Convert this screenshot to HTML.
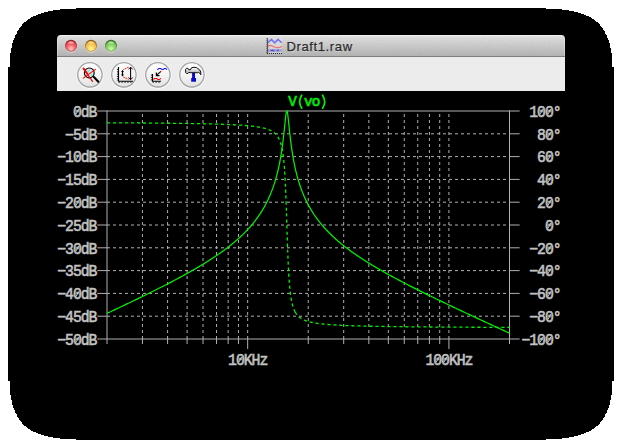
<!DOCTYPE html>
<html><head><meta charset="utf-8"><title>Draft1.raw</title>
<style>
html,body{margin:0;padding:0;background:#fff;}
body{width:622px;height:448px;overflow:hidden;position:relative;font-family:"Liberation Sans",sans-serif;}
svg{position:absolute;left:0;top:0;display:block}
.mono text{font-family:"Liberation Mono",monospace;font-weight:normal;font-size:14.8px;letter-spacing:-1.050px;stroke-width:0.55px;paint-order:stroke;}
#title{position:absolute;left:286.5px;top:38.7px;height:16px;line-height:16px;font-size:13px;letter-spacing:0.62px;color:#2c2c2c;-webkit-text-stroke:0.25px #2c2c2c;white-space:nowrap;text-shadow:0 1px 0 rgba(255,255,255,.55)}
</style></head><body>
<svg width="622" height="448" viewBox="0 0 622 448">
<defs>
<linearGradient id="tb" x1="0" y1="0" x2="0" y2="1"><stop offset="0" stop-color="#e4e4e4"/><stop offset="0.1" stop-color="#dfdfdf"/><stop offset="1" stop-color="#b3b3b3"/></linearGradient>
<radialGradient id="gr" cx="0.5" cy="0.78" r="0.7"><stop offset="0" stop-color="#fdd0cc"/><stop offset="0.55" stop-color="#f6666a"/><stop offset="0.9" stop-color="#ec4a52"/><stop offset="1" stop-color="#c8343c"/></radialGradient>
<radialGradient id="gy" cx="0.5" cy="0.78" r="0.7"><stop offset="0" stop-color="#fef7a4"/><stop offset="0.55" stop-color="#f8cc58"/><stop offset="0.9" stop-color="#f0ae3c"/><stop offset="1" stop-color="#c88a24"/></radialGradient>
<radialGradient id="gg" cx="0.5" cy="0.78" r="0.7"><stop offset="0" stop-color="#d6f6b4"/><stop offset="0.55" stop-color="#8cd86a"/><stop offset="0.9" stop-color="#6cc04e"/><stop offset="1" stop-color="#4a9634"/></radialGradient>
<linearGradient id="bt" x1="0" y1="0" x2="0" y2="1"><stop offset="0" stop-color="#ffffff"/><stop offset="0.5" stop-color="#f4f4f4"/><stop offset="1" stop-color="#e2e2e2"/></linearGradient>
<linearGradient id="hm" x1="0" y1="0" x2="0" y2="1"><stop offset="0" stop-color="#ffffff"/><stop offset="0.6" stop-color="#c4c4c4"/><stop offset="1" stop-color="#e4e4e4"/></linearGradient>
<linearGradient id="rr" x1="0" y1="0" x2="0" y2="1"><stop offset="0" stop-color="#8a1d22"/><stop offset="1" stop-color="#c8565a"/></linearGradient>
<linearGradient id="ry" x1="0" y1="0" x2="0" y2="1"><stop offset="0" stop-color="#8a5510"/><stop offset="1" stop-color="#cfa040"/></linearGradient>
<linearGradient id="rg" x1="0" y1="0" x2="0" y2="1"><stop offset="0" stop-color="#2c681a"/><stop offset="1" stop-color="#74b058"/></linearGradient>
<linearGradient id="spec" x1="0" y1="0" x2="0" y2="1"><stop offset="0" stop-color="#fff" stop-opacity="0.85"/><stop offset="1" stop-color="#fff" stop-opacity="0"/></linearGradient>
<filter id="noise" x="0" y="0" width="100%" height="100%"><feTurbulence type="fractalNoise" baseFrequency="0.8" numOctaves="2" seed="3" result="t"/><feColorMatrix type="matrix" values="0 0 0 0 0  0 0 0 0 0  0 0 0 0 0  1.6 0 0 0 -0.3"/></filter>
</defs>
<path d="M76 8 L76 9 L60 9 L60 10 L53 10 L53 11 L48 11 L48 12 L44 12 L44 13 L41 13 L41 14 L38 14 L38 15 L36 15 L36 16 L33 16 L33 17 L31 17 L31 18 L30 18 L30 19 L28 19 L28 20 L27 20 L27 21 L26 21 L26 22 L24 22 L24 23 L23 23 L23 24 L22 24 L22 26 L21 26 L21 27 L20 27 L20 28 L19 28 L19 30 L18 30 L18 31 L17 31 L17 34 L16 34 L16 35 L15 35 L15 38 L14 38 L14 40 L13 40 L13 43 L12 43 L12 48 L11 48 L11 53 L10 53 L10 67 L8 67 L8 381 L10 381 L10 395 L11 395 L11 400 L12 400 L12 405 L13 405 L13 408 L14 408 L14 410 L15 410 L15 413 L16 413 L16 414 L17 414 L17 417 L18 417 L18 418 L19 418 L19 420 L20 420 L20 421 L21 421 L21 422 L22 422 L22 424 L23 424 L23 425 L24 425 L24 426 L26 426 L26 427 L27 427 L27 428 L28 428 L28 429 L30 429 L30 430 L31 430 L31 431 L33 431 L33 432 L36 432 L36 433 L38 433 L38 434 L41 434 L41 435 L44 435 L44 436 L48 436 L48 437 L53 437 L53 438 L60 438 L60 439 L76 439 L76 440 L546 440 L546 439 L562 439 L562 438 L569 438 L569 437 L574 437 L574 436 L578 436 L578 435 L581 435 L581 434 L584 434 L584 433 L586 433 L586 432 L589 432 L589 431 L591 431 L591 430 L592 430 L592 429 L594 429 L594 428 L595 428 L595 427 L596 427 L596 426 L598 426 L598 425 L599 425 L599 424 L600 424 L600 422 L601 422 L601 421 L602 421 L602 420 L603 420 L603 418 L604 418 L604 417 L605 417 L605 414 L606 414 L606 413 L607 413 L607 410 L608 410 L608 408 L609 408 L609 405 L610 405 L610 400 L611 400 L611 395 L612 395 L612 381 L614 381 L614 67 L612 67 L612 53 L611 53 L611 48 L610 48 L610 43 L609 43 L609 40 L608 40 L608 38 L607 38 L607 35 L606 35 L606 34 L605 34 L605 31 L604 31 L604 30 L603 30 L603 28 L602 28 L602 27 L601 27 L601 26 L600 26 L600 24 L599 24 L599 23 L598 23 L598 22 L596 22 L596 21 L595 21 L595 20 L594 20 L594 19 L592 19 L592 18 L591 18 L591 17 L589 17 L589 16 L586 16 L586 15 L584 15 L584 14 L581 14 L581 13 L578 13 L578 12 L574 12 L574 11 L569 11 L569 10 L562 10 L562 9 L546 9 L546 8Z" fill="#000" shape-rendering="crispEdges"/>
<!-- window chrome -->
<path d="M57 57V39a4 4 0 0 1 4-4H561a4 4 0 0 1 4 4V57Z" fill="url(#tb)"/>
<rect x="60" y="35" width="502" height="1" fill="#f4f4f4"/><rect x="58.5" y="35.6" width="505" height="1" fill="#f0f0f0" opacity="0.5"/>
<rect x="57" y="35" width="508" height="21" fill="#808080" filter="url(#noise)" opacity="0.03"/>
<rect x="57" y="39" width="1" height="17" fill="#fff" opacity="0.3"/><rect x="564" y="39" width="1" height="17" fill="#fff" opacity="0.3"/>
<rect x="57" y="56" width="508" height="1" fill="#7e7e7e"/>
<rect x="57" y="57" width="508" height="34" fill="#ececec"/>
<g>
<circle cx="71" cy="46.6" r="6.3" fill="#fff" opacity="0.35"/><circle cx="91" cy="46.6" r="6.3" fill="#fff" opacity="0.35"/><circle cx="111" cy="46.6" r="6.3" fill="#fff" opacity="0.35"/>
<circle cx="71" cy="45.8" r="6" fill="url(#rr)"/><circle cx="71" cy="45.9" r="5.1" fill="url(#gr)"/><ellipse cx="71" cy="42.9" rx="2.9" ry="1.5" fill="url(#spec)"/>
<circle cx="91" cy="45.8" r="6" fill="url(#ry)"/><circle cx="91" cy="45.9" r="5.1" fill="url(#gy)"/><ellipse cx="91" cy="42.9" rx="2.9" ry="1.5" fill="url(#spec)"/>
<circle cx="111" cy="45.8" r="6" fill="url(#rg)"/><circle cx="111" cy="45.9" r="5.1" fill="url(#gg)"/><ellipse cx="111" cy="42.9" rx="2.9" ry="1.5" fill="url(#spec)"/>
</g>
<g id="buttons">
<g fill="none" stroke="#f8f8f8" stroke-width="1.2"><circle cx="90" cy="75.4" r="13"/><circle cx="124" cy="75.4" r="13"/><circle cx="158" cy="75.4" r="13"/><circle cx="192" cy="75.4" r="13"/></g>
<g fill="url(#bt)" stroke="#a4a4a4" stroke-width="1.3">
<circle cx="89.9" cy="74.8" r="12.2"/><circle cx="123.9" cy="74.8" r="12.2"/><circle cx="157.9" cy="74.8" r="12.2"/><circle cx="191.9" cy="74.8" r="12.2"/>
</g>

<!-- icon1: zoom-to-fit (magnifier with red X) -->
<circle cx="89.3" cy="72.9" r="4.9" fill="#e6e9e9" stroke="#000" stroke-width="1.15"/>
<path d="M86.3 71.6Q87.6 69.2 90.6 69.4L88.6 72.4ZM93.2 73.2Q92.9 75.9 90.4 76.9L90.6 74.6Z" fill="#6ff0f0" stroke="none"/>
<path d="M93.9 77L98.3 81.7" stroke="#000" stroke-width="2.1" stroke-linecap="round"/>
<path d="M83.5 68.5L87 73.4" stroke="#ff0000" stroke-width="1.9" stroke-linecap="round"/>
<path d="M83.5 68.5L92.5 81.3" stroke="#ff0000" stroke-width="1.25" stroke-linecap="round"/>
<path d="M95.4 69.4L83.4 78.1" stroke="#ff0000" stroke-width="1.15" stroke-linecap="round"/>
<!-- icon2: autorange -->
<path d="M118.5 67V81.2H133" stroke="#000" stroke-width="1.1" fill="none"/>
<path d="M117.4 68.9V81" stroke="#000" stroke-width="0.9" stroke-dasharray="1.1 1.25" fill="none"/>
<path d="M118.6 82.2H133" stroke="#000" stroke-width="0.9" stroke-dasharray="1.3 1.6" fill="none"/>
<path d="M128.6 67.1L123.3 69.7M123.3 77.1L128.6 79.5" stroke="#ff3a1a" stroke-width="1.15" stroke-dasharray="1.7 0.8" fill="none"/>
<path d="M122.5 70.6V76" stroke="#000" stroke-width="1.15" fill="none"/>
<path d="M121.1 72L122.5 70L123.9 72ZM121.1 74.6L122.5 76.6L123.9 74.6Z" fill="#000" stroke="none"/>
<path d="M130.6 67.3V79.5" stroke="#000" stroke-width="1.05" fill="none"/>
<path d="M128.5 69.4L130.6 67.2L132.7 69.4M128.5 77.5L130.6 79.7L132.7 77.5" stroke="#000" stroke-width="0.95" fill="none"/>
<!-- icon3: pick visible traces -->
<path d="M157.3 69.8L158.8 68.4H160.6L161.9 69.5H163.3L164.5 68.4H165.9L166.7 69.8" stroke="#1010ff" stroke-width="1.05" fill="none"/>
<path d="M160.6 71.7L156.8 75.2" stroke="#000" stroke-width="1.1" fill="none"/>
<path d="M156.4 72.5V75.6H159.5" stroke="#000" stroke-width="1.2" fill="none"/>
<circle cx="160.7" cy="71.5" r="0.7" fill="#e00000" stroke="none"/>
<path d="M152.5 73.9V81.2H161" stroke="#000" stroke-width="1.1" fill="none"/>
<path d="M151.4 74.6V81" stroke="#000" stroke-width="0.9" stroke-dasharray="1.1 1.25" fill="none"/>
<path d="M152.6 82.2H161" stroke="#000" stroke-width="0.9" stroke-dasharray="1.3 1.6" fill="none"/>
<path d="M153.4 79.5L154.6 78.5H156.7L157.9 79.5H159.5L160.9 78.4" stroke="#ff0000" stroke-width="1.05" fill="none"/>
<!-- icon4: hammer (control panel) -->
<rect x="192.1" y="73" width="2.9" height="5.4" fill="#0a0ac8" stroke="none"/>
<rect x="191.2" y="78" width="4.8" height="3.7" fill="#0a0ac8" stroke="none"/>
<path d="M185.6 69.3L186.4 68.4H187.9L188.7 69.7H190.5L191.6 67.7Q194 66.8 196.4 67.6L197.8 68.5Q200.3 69.8 200.8 72V74.7L199.7 73Q198.8 71.9 197.4 72.7H190.6L188.7 72.4L188 73.4H186.4L185.6 72.6Z" fill="url(#hm)" stroke="#000" stroke-width="0.95" stroke-linejoin="round"/>

</g>

<g transform="translate(266,38)">
<rect x="2" y="0.3" width="14" height="15" fill="#e4e6e4" opacity="0.5"/>
<rect x="2" y="11.2" width="14" height="2.5" fill="#9a9adc" opacity="0.9"/>
<path d="M4.6 12.5h3.8M10.8 12.5h1.8" stroke="#4040c8" stroke-width="1.4" fill="none" opacity="0.85"/>
<path d="M1.9 4.8L5.4 1.4L8.7 4.8L12 1.4L15.7 4.8" stroke="#6868f2" stroke-width="1.5" fill="none" opacity="0.9"/>
<path d="M2 8.5C3 7.2 4.4 7.1 6 8S10 9.6 12 9.6S15 9.1 15.7 8.1" stroke="#f26a6a" stroke-width="1.4" fill="none" opacity="0.9"/>
<path d="M1.6 0.2V15.6" stroke="#3a3a3a" stroke-width="1.1" fill="none" opacity="0.8"/>
<path d="M0.7 0.2V15" stroke="#2a2a2a" stroke-width="0.9" stroke-dasharray="1 1" fill="none" opacity="0.7"/>
<path d="M1 15.5H16" stroke="#1a1a1a" stroke-width="1.1" stroke-dasharray="1 1" fill="none" opacity="0.9"/>
</g>

<g id="plot" fill="none">
<line x1="107.0" y1="133.80" x2="509.5" y2="133.80" stroke="#b0b0b0" stroke-dasharray="3 3"/>
<line x1="107.0" y1="156.60" x2="509.5" y2="156.60" stroke="#b0b0b0" stroke-dasharray="3 3"/>
<line x1="107.0" y1="179.40" x2="509.5" y2="179.40" stroke="#b0b0b0" stroke-dasharray="3 3"/>
<line x1="107.0" y1="202.20" x2="509.5" y2="202.20" stroke="#b0b0b0" stroke-dasharray="3 3"/>
<line x1="107.0" y1="225.00" x2="509.5" y2="225.00" stroke="#b0b0b0" stroke-dasharray="3 3"/>
<line x1="107.0" y1="247.80" x2="509.5" y2="247.80" stroke="#b0b0b0" stroke-dasharray="3 3"/>
<line x1="107.0" y1="270.60" x2="509.5" y2="270.60" stroke="#b0b0b0" stroke-dasharray="3 3"/>
<line x1="107.0" y1="293.40" x2="509.5" y2="293.40" stroke="#b0b0b0" stroke-dasharray="3 3"/>
<line x1="107.0" y1="316.20" x2="509.5" y2="316.20" stroke="#b0b0b0" stroke-dasharray="3 3"/>
<line x1="142.44" y1="339.0" x2="142.44" y2="111.0" stroke="#b0b0b0" stroke-dasharray="3 3"/>
<line x1="142.44" y1="339.0" x2="142.44" y2="344" stroke="#b0b0b0"/>
<line x1="167.58" y1="339.0" x2="167.58" y2="111.0" stroke="#b0b0b0" stroke-dasharray="3 3"/>
<line x1="167.58" y1="339.0" x2="167.58" y2="344" stroke="#b0b0b0"/>
<line x1="187.09" y1="339.0" x2="187.09" y2="111.0" stroke="#b0b0b0" stroke-dasharray="3 3"/>
<line x1="187.09" y1="339.0" x2="187.09" y2="344" stroke="#b0b0b0"/>
<line x1="203.02" y1="339.0" x2="203.02" y2="111.0" stroke="#b0b0b0" stroke-dasharray="3 3"/>
<line x1="203.02" y1="339.0" x2="203.02" y2="344" stroke="#b0b0b0"/>
<line x1="216.49" y1="339.0" x2="216.49" y2="111.0" stroke="#b0b0b0" stroke-dasharray="3 3"/>
<line x1="216.49" y1="339.0" x2="216.49" y2="344" stroke="#b0b0b0"/>
<line x1="228.16" y1="339.0" x2="228.16" y2="111.0" stroke="#b0b0b0" stroke-dasharray="3 3"/>
<line x1="228.16" y1="339.0" x2="228.16" y2="344" stroke="#b0b0b0"/>
<line x1="238.46" y1="339.0" x2="238.46" y2="111.0" stroke="#b0b0b0" stroke-dasharray="3 3"/>
<line x1="238.46" y1="339.0" x2="238.46" y2="344" stroke="#b0b0b0"/>
<line x1="247.67" y1="339.0" x2="247.67" y2="111.0" stroke="#b0b0b0" stroke-dasharray="3 3"/>
<line x1="247.67" y1="339.0" x2="247.67" y2="349" stroke="#b0b0b0"/>
<line x1="308.25" y1="339.0" x2="308.25" y2="111.0" stroke="#b0b0b0" stroke-dasharray="3 3"/>
<line x1="308.25" y1="339.0" x2="308.25" y2="344" stroke="#b0b0b0"/>
<line x1="343.69" y1="339.0" x2="343.69" y2="111.0" stroke="#b0b0b0" stroke-dasharray="3 3"/>
<line x1="343.69" y1="339.0" x2="343.69" y2="344" stroke="#b0b0b0"/>
<line x1="368.83" y1="339.0" x2="368.83" y2="111.0" stroke="#b0b0b0" stroke-dasharray="3 3"/>
<line x1="368.83" y1="339.0" x2="368.83" y2="344" stroke="#b0b0b0"/>
<line x1="388.34" y1="339.0" x2="388.34" y2="111.0" stroke="#b0b0b0" stroke-dasharray="3 3"/>
<line x1="388.34" y1="339.0" x2="388.34" y2="344" stroke="#b0b0b0"/>
<line x1="404.27" y1="339.0" x2="404.27" y2="111.0" stroke="#b0b0b0" stroke-dasharray="3 3"/>
<line x1="404.27" y1="339.0" x2="404.27" y2="344" stroke="#b0b0b0"/>
<line x1="417.74" y1="339.0" x2="417.74" y2="111.0" stroke="#b0b0b0" stroke-dasharray="3 3"/>
<line x1="417.74" y1="339.0" x2="417.74" y2="344" stroke="#b0b0b0"/>
<line x1="429.41" y1="339.0" x2="429.41" y2="111.0" stroke="#b0b0b0" stroke-dasharray="3 3"/>
<line x1="429.41" y1="339.0" x2="429.41" y2="344" stroke="#b0b0b0"/>
<line x1="439.71" y1="339.0" x2="439.71" y2="111.0" stroke="#b0b0b0" stroke-dasharray="3 3"/>
<line x1="439.71" y1="339.0" x2="439.71" y2="344" stroke="#b0b0b0"/>
<line x1="448.92" y1="339.0" x2="448.92" y2="111.0" stroke="#b0b0b0" stroke-dasharray="3 3"/>
<line x1="448.92" y1="339.0" x2="448.92" y2="349" stroke="#b0b0b0"/>
<line x1="97.3" y1="111.0" x2="519.6" y2="111.0" stroke="#b0b0b0"/>
<line x1="97.3" y1="339.0" x2="519.6" y2="339.0" stroke="#b0b0b0"/>
<line x1="107.0" y1="110.5" x2="107.0" y2="344" stroke="#b0b0b0"/>
<line x1="509.5" y1="110.5" x2="509.5" y2="344" stroke="#b0b0b0"/>
<line x1="97.3" y1="133.80" x2="107.0" y2="133.80" stroke="#b0b0b0"/>
<line x1="509.5" y1="133.80" x2="519.6" y2="133.80" stroke="#b0b0b0"/>
<line x1="97.3" y1="156.60" x2="107.0" y2="156.60" stroke="#b0b0b0"/>
<line x1="509.5" y1="156.60" x2="519.6" y2="156.60" stroke="#b0b0b0"/>
<line x1="97.3" y1="179.40" x2="107.0" y2="179.40" stroke="#b0b0b0"/>
<line x1="509.5" y1="179.40" x2="519.6" y2="179.40" stroke="#b0b0b0"/>
<line x1="97.3" y1="202.20" x2="107.0" y2="202.20" stroke="#b0b0b0"/>
<line x1="509.5" y1="202.20" x2="519.6" y2="202.20" stroke="#b0b0b0"/>
<line x1="97.3" y1="225.00" x2="107.0" y2="225.00" stroke="#b0b0b0"/>
<line x1="509.5" y1="225.00" x2="519.6" y2="225.00" stroke="#b0b0b0"/>
<line x1="97.3" y1="247.80" x2="107.0" y2="247.80" stroke="#b0b0b0"/>
<line x1="509.5" y1="247.80" x2="519.6" y2="247.80" stroke="#b0b0b0"/>
<line x1="97.3" y1="270.60" x2="107.0" y2="270.60" stroke="#b0b0b0"/>
<line x1="509.5" y1="270.60" x2="519.6" y2="270.60" stroke="#b0b0b0"/>
<line x1="97.3" y1="293.40" x2="107.0" y2="293.40" stroke="#b0b0b0"/>
<line x1="509.5" y1="293.40" x2="519.6" y2="293.40" stroke="#b0b0b0"/>
<line x1="97.3" y1="316.20" x2="107.0" y2="316.20" stroke="#b0b0b0"/>
<line x1="509.5" y1="316.20" x2="519.6" y2="316.20" stroke="#b0b0b0"/>
<path d="M107.00 122.79L107.50 122.80L108.00 122.80L108.50 122.80L109.00 122.80L109.50 122.81L110.00 122.81L110.18 122.81M112.98 122.82L113.48 122.83L113.98 122.83L114.48 122.83L114.98 122.83L115.48 122.84L115.98 122.84L116.18 122.84M118.98 122.85L119.48 122.86L119.98 122.86L120.48 122.86L120.98 122.87L121.48 122.87L121.98 122.87L122.18 122.87M124.98 122.89L125.48 122.89L125.98 122.89L126.48 122.90L126.98 122.90L127.48 122.90L127.98 122.91L128.18 122.91M130.98 122.93L131.48 122.93L131.98 122.93L132.48 122.94L132.98 122.94L133.48 122.94L133.98 122.94L134.18 122.95M136.98 122.97L137.48 122.97L137.98 122.97L138.48 122.98L138.98 122.98L139.48 122.98L139.98 122.99L140.18 122.99M142.98 123.01L143.48 123.01L143.98 123.02L144.48 123.02L144.98 123.02L145.48 123.03L145.98 123.03L146.18 123.03M148.98 123.06L149.48 123.06L149.98 123.06L150.48 123.07L150.98 123.07L151.48 123.08L151.98 123.08L152.18 123.08M154.98 123.11L155.48 123.11L155.98 123.12L156.48 123.12L156.98 123.12L157.48 123.13L157.98 123.13L158.18 123.14M160.98 123.16L161.48 123.17L161.98 123.17L162.48 123.18L162.98 123.18L163.48 123.19L163.98 123.19L164.18 123.19M166.98 123.22L167.48 123.23L167.98 123.23L168.48 123.24L168.98 123.25L169.48 123.25L169.98 123.26L170.18 123.26M172.98 123.29L173.48 123.30L173.98 123.30L174.48 123.31L174.98 123.32L175.48 123.32L175.98 123.33L176.18 123.33M178.98 123.37L179.48 123.37L179.98 123.38L180.48 123.39L180.98 123.39L181.48 123.40L181.98 123.41L182.18 123.41M184.98 123.45L185.48 123.46L185.98 123.46L186.48 123.47L186.98 123.48L187.48 123.49L187.98 123.49L188.18 123.50M190.98 123.54L191.48 123.55L191.98 123.56L192.48 123.57L192.98 123.57L193.48 123.58L193.98 123.59L194.18 123.60M196.98 123.65L197.48 123.65L197.98 123.66L198.48 123.67L198.98 123.68L199.48 123.69L199.98 123.70L200.18 123.71M202.98 123.76L203.48 123.77L203.98 123.78L204.48 123.80L204.98 123.81L205.48 123.82L205.98 123.83L206.18 123.83M208.98 123.90L209.48 123.91L209.98 123.92L210.48 123.94L210.98 123.95L211.48 123.96L211.98 123.97L212.18 123.98M214.98 124.05L215.48 124.07L215.98 124.08L216.48 124.10L216.98 124.11L217.48 124.13L217.98 124.14L218.18 124.15M220.98 124.24L221.48 124.25L221.98 124.27L222.48 124.29L222.98 124.30L223.48 124.32L223.98 124.34L224.18 124.35M226.98 124.45L227.48 124.47L227.98 124.49L228.48 124.51L228.96 124.53L229.44 124.55L229.92 124.57L230.18 124.59M232.96 124.71L233.44 124.74L233.92 124.76L234.40 124.78L234.88 124.81L235.36 124.83L235.84 124.86L236.16 124.88M238.96 125.04L239.44 125.07L239.92 125.10L240.40 125.13L240.88 125.16L241.36 125.19L241.84 125.22L242.16 125.24M244.94 125.45L245.42 125.49L245.90 125.52L246.38 125.56L246.86 125.60L247.34 125.65L247.80 125.69L248.14 125.72M250.92 125.99L251.38 126.04L251.84 126.09L252.30 126.14L252.76 126.19L253.22 126.25L253.68 126.30L254.10 126.36M256.88 126.74L257.32 126.80L257.76 126.87L258.20 126.94L258.64 127.02L259.08 127.09L259.52 127.17L259.96 127.25L260.02 127.26M262.78 127.83L263.20 127.93L263.62 128.03L264.02 128.13L264.42 128.24L264.82 128.35L265.22 128.46L265.62 128.57L265.86 128.65M268.52 129.56L268.88 129.71L269.24 129.86L269.60 130.01L269.96 130.17L270.30 130.33L270.64 130.50L270.98 130.68L271.32 130.86L271.42 130.91M273.76 132.43L274.06 132.66L274.34 132.89L274.62 133.12L274.90 133.37L275.16 133.61L275.42 133.86L275.68 134.13L275.94 134.40L276.10 134.58M277.80 136.81L278.00 137.12L278.20 137.45L278.40 137.80L278.58 138.12L278.76 138.46L278.94 138.81L279.12 139.17L279.30 139.56L279.32 139.60M280.36 142.21L280.50 142.62L280.64 143.04L280.76 143.43L280.88 143.82L281.00 144.23L281.12 144.65L281.24 145.09L281.28 145.24M281.92 147.93L282.02 148.41L282.12 148.90L282.22 149.41L282.30 149.83L282.38 150.26L282.46 150.71L282.52 151.06M282.96 153.84L283.04 154.40L283.12 154.98L283.18 155.43L283.24 155.89L283.30 156.36L283.36 156.84L283.38 157.00M283.70 159.82L283.76 160.40L283.82 160.99L283.88 161.60L283.94 162.22L284.00 162.86M284.26 165.86L284.30 166.35L284.34 166.86L284.38 167.37L284.42 167.89L284.46 168.43L284.50 168.97M284.68 171.56L284.72 172.17L284.76 172.79L284.80 173.42L284.84 174.06L284.88 174.72M285.04 177.48L285.08 178.20L285.12 178.94L285.16 179.69L285.20 180.46L285.22 180.85M285.36 183.68L285.40 184.53L285.44 185.39L285.48 186.26L285.50 186.70M285.62 189.45L285.66 190.40L285.68 190.88L285.70 191.37L285.72 191.86L285.74 192.35L285.76 192.85M285.86 195.39L285.88 195.92L285.90 196.44L285.92 196.97L285.94 197.50L285.96 198.04L285.98 198.58M286.08 201.35L286.10 201.91L286.12 202.48L286.14 203.05L286.16 203.62L286.18 204.20L286.20 204.78M286.30 207.74L286.32 208.34L286.34 208.94L286.36 209.55L286.38 210.16L286.40 210.77M286.48 213.24L286.50 213.86L286.52 214.49L286.54 215.11L286.56 215.74L286.58 216.37M286.68 219.55L286.70 220.19L286.72 220.83L286.74 221.47L286.76 222.11L286.78 222.75M286.86 225.32L286.88 225.96L286.90 226.61L286.92 227.25L286.94 227.89L286.96 228.53M287.06 231.72L287.08 232.36L287.10 232.99L287.12 233.63L287.14 234.26L287.16 234.89M287.24 237.38L287.26 238.00L287.28 238.62L287.30 239.23L287.32 239.84L287.34 240.45M287.44 243.45L287.46 244.04L287.48 244.63L287.50 245.22L287.52 245.80L287.54 246.38L287.56 246.95M287.66 249.77L287.68 250.32L287.70 250.87L287.72 251.42L287.74 251.96L287.76 252.50M287.88 255.64L287.90 256.15L287.92 256.65L287.94 257.15L287.96 257.65L287.98 258.14L288.00 258.63M288.12 261.48L288.16 262.39L288.20 263.30L288.24 264.18L288.26 264.61M288.40 267.56L288.44 268.36L288.48 269.15L288.52 269.93L288.56 270.69M288.72 273.58L288.76 274.27L288.80 274.95L288.84 275.61L288.88 276.26L288.92 276.90M289.10 279.62L289.14 280.19L289.18 280.75L289.22 281.30L289.26 281.84L289.30 282.37L289.34 282.89M289.56 285.57L289.62 286.26L289.68 286.92L289.74 287.57L289.80 288.20L289.86 288.81M290.16 291.64L290.22 292.16L290.28 292.67L290.34 293.16L290.40 293.64L290.46 294.11L290.52 294.57L290.56 294.87M290.96 297.61L291.04 298.11L291.12 298.59L291.20 299.06L291.28 299.51L291.36 299.95L291.44 300.38L291.52 300.80M292.10 303.49L292.20 303.90L292.32 304.38L292.44 304.83L292.56 305.28L292.68 305.70L292.80 306.11L292.92 306.51L292.94 306.57M293.88 309.23L294.04 309.62L294.20 310.00L294.36 310.36L294.52 310.70L294.70 311.07L294.88 311.43L295.06 311.77L295.24 312.10L295.44 312.45L295.64 312.78L295.84 313.10L296.04 313.41L296.26 313.73L296.48 314.04L296.70 314.34L296.92 314.62L296.96 314.67M298.88 316.70L299.16 316.95L299.44 317.18L299.72 317.41L300.02 317.64L300.32 317.86L300.62 318.07L300.92 318.27L301.24 318.48L301.46 318.61M303.94 319.92L304.30 320.08L304.66 320.23L305.02 320.38L305.38 320.52L305.76 320.66L306.14 320.80L306.52 320.93L306.90 321.06L306.92 321.06M309.60 321.84L310.00 321.95L310.42 322.05L310.84 322.15L311.26 322.24L311.68 322.34L312.10 322.43L312.52 322.51L312.72 322.55M315.48 323.05L315.92 323.12L316.36 323.19L316.80 323.26L317.24 323.32L317.68 323.39L318.12 323.45L318.58 323.51L318.64 323.52M321.42 323.86L321.88 323.91L322.34 323.96L322.80 324.01L323.26 324.06L323.72 324.11L324.18 324.15L324.60 324.19M327.40 324.44L327.88 324.48L328.36 324.52L328.84 324.56L329.32 324.60L329.80 324.63L330.28 324.67L330.58 324.69M333.38 324.88L333.86 324.91L334.34 324.94L334.82 324.97L335.30 325.00L335.78 325.02L336.26 325.05L336.58 325.07M339.38 325.22L339.86 325.24L340.34 325.27L340.82 325.29L341.30 325.31L341.78 325.34L342.26 325.36L342.56 325.37M345.36 325.49L345.86 325.51L346.36 325.53L346.86 325.55L347.36 325.57L347.86 325.59L348.36 325.61L348.56 325.62M351.36 325.72L351.86 325.74L352.36 325.75L352.86 325.77L353.36 325.78L353.86 325.80L354.36 325.82L354.56 325.82M357.36 325.91L357.86 325.92L358.36 325.94L358.86 325.95L359.36 325.96L359.86 325.98L360.36 325.99L360.56 326.00M363.36 326.07L363.86 326.08L364.36 326.09L364.86 326.10L365.36 326.12L365.86 326.13L366.36 326.14L366.56 326.14M369.36 326.21L369.86 326.22L370.36 326.23L370.86 326.24L371.36 326.25L371.86 326.26L372.36 326.27L372.56 326.27M375.36 326.33L375.86 326.34L376.36 326.35L376.86 326.36L377.36 326.37L377.86 326.38L378.36 326.38L378.56 326.39M381.36 326.44L381.86 326.44L382.36 326.45L382.86 326.46L383.36 326.47L383.86 326.48L384.36 326.48L384.56 326.49M387.36 326.53L387.86 326.54L388.36 326.55L388.86 326.55L389.36 326.56L389.86 326.57L390.36 326.57L390.56 326.58M393.36 326.62L393.86 326.62L394.36 326.63L394.86 326.64L395.36 326.64L395.86 326.65L396.36 326.66L396.56 326.66M399.36 326.69L399.86 326.70L400.36 326.70L400.86 326.71L401.36 326.72L401.86 326.72L402.36 326.73L402.56 326.73M405.36 326.76L405.86 326.77L406.36 326.77L406.86 326.78L407.36 326.78L407.86 326.79L408.36 326.79L408.56 326.80M411.36 326.82L411.86 326.83L412.36 326.83L412.86 326.84L413.36 326.84L413.86 326.85L414.36 326.85L414.56 326.86M417.34 326.88L417.84 326.89L418.34 326.89L418.84 326.89L419.34 326.90L419.84 326.90L420.34 326.91L420.54 326.91M423.34 326.93L423.84 326.94L424.34 326.94L424.84 326.95L425.34 326.95L425.84 326.95L426.34 326.96L426.54 326.96M429.34 326.98L429.84 326.99L430.34 326.99L430.84 326.99L431.34 327.00L431.84 327.00L432.34 327.00L432.54 327.01M435.34 327.03L435.84 327.03L436.34 327.03L436.84 327.04L437.34 327.04L437.84 327.04L438.34 327.05L438.54 327.05M441.34 327.07L441.84 327.07L442.34 327.07L442.84 327.08L443.34 327.08L443.84 327.08L444.34 327.08L444.54 327.09M447.34 327.10L447.84 327.11L448.34 327.11L448.84 327.11L449.34 327.11L449.84 327.12L450.34 327.12L450.54 327.12M453.34 327.14L453.84 327.14L454.34 327.14L454.84 327.15L455.34 327.15L455.84 327.15L456.34 327.15L456.54 327.15M459.34 327.17L459.84 327.17L460.34 327.17L460.84 327.18L461.34 327.18L461.84 327.18L462.34 327.18L462.54 327.19M465.34 327.20L465.84 327.20L466.34 327.20L466.84 327.21L467.34 327.21L467.84 327.21L468.34 327.21L468.54 327.21M471.34 327.23L471.84 327.23L472.34 327.23L472.84 327.23L473.34 327.24L473.84 327.24L474.34 327.24L474.54 327.24M477.34 327.25L477.84 327.25L478.34 327.26L478.84 327.26L479.34 327.26L479.84 327.26L480.34 327.26L480.54 327.26M483.34 327.28L483.84 327.28L484.34 327.28L484.84 327.28L485.34 327.28L485.84 327.28L486.34 327.29L486.54 327.29M489.34 327.30L489.84 327.30L490.34 327.30L490.84 327.30L491.34 327.30L491.84 327.31L492.34 327.31L492.54 327.31M495.34 327.32L495.84 327.32L496.34 327.32L496.84 327.32L497.34 327.32L497.84 327.33L498.34 327.33L498.54 327.33M501.34 327.34L501.84 327.34L502.34 327.34L502.84 327.34L503.34 327.34L503.84 327.34L504.34 327.35L504.54 327.35M507.34 327.35L507.84 327.36L508.34 327.36L508.84 327.36L509.34 327.36L509.50 327.36" fill="none" stroke="#00f000" stroke-width="1.3"/>
<polyline points="107.00,313.37 107.50,313.14 108.00,312.90 108.50,312.67 109.00,312.43 109.50,312.20 110.00,311.96 110.50,311.73 111.00,311.49 111.50,311.26 112.00,311.02 112.50,310.79 113.00,310.55 113.50,310.32 114.00,310.08 114.50,309.85 115.00,309.61 115.50,309.38 116.00,309.14 116.50,308.90 117.00,308.67 117.50,308.43 118.00,308.20 118.50,307.96 119.00,307.72 119.50,307.49 120.00,307.25 120.50,307.01 121.00,306.78 121.50,306.54 122.00,306.30 122.50,306.07 123.00,305.83 123.50,305.59 124.00,305.35 124.50,305.11 125.00,304.88 125.50,304.64 126.00,304.40 126.50,304.16 127.00,303.92 127.50,303.68 128.00,303.45 128.50,303.21 129.00,302.97 129.50,302.73 130.00,302.49 130.50,302.25 131.00,302.01 131.50,301.77 132.00,301.53 132.50,301.29 133.00,301.05 133.50,300.81 134.00,300.57 134.50,300.33 135.00,300.09 135.50,299.85 136.00,299.60 136.50,299.36 137.00,299.12 137.50,298.88 138.00,298.64 138.50,298.40 139.00,298.15 139.50,297.91 140.00,297.67 140.50,297.42 141.00,297.18 141.50,296.94 142.00,296.69 142.50,296.45 143.00,296.21 143.50,295.96 144.00,295.72 144.50,295.47 145.00,295.23 145.50,294.98 146.00,294.74 146.50,294.49 147.00,294.25 147.50,294.00 148.00,293.76 148.50,293.51 149.00,293.26 149.50,293.02 150.00,292.77 150.50,292.52 151.00,292.27 151.50,292.03 152.00,291.78 152.50,291.53 153.00,291.28 153.50,291.03 154.00,290.78 154.50,290.53 155.00,290.28 155.50,290.03 156.00,289.78 156.50,289.53 157.00,289.28 157.50,289.03 158.00,288.78 158.50,288.53 159.00,288.28 159.50,288.02 160.00,287.77 160.50,287.52 161.00,287.26 161.50,287.01 162.00,286.76 162.50,286.50 163.00,286.25 163.50,285.99 164.00,285.74 164.50,285.48 165.00,285.22 165.50,284.97 166.00,284.71 166.50,284.45 167.00,284.20 167.50,283.94 168.00,283.68 168.50,283.42 169.00,283.16 169.50,282.90 170.00,282.64 170.50,282.38 171.00,282.12 171.50,281.86 172.00,281.60 172.50,281.34 173.00,281.07 173.50,280.81 174.00,280.55 174.50,280.28 175.00,280.02 175.50,279.76 176.00,279.49 176.50,279.22 177.00,278.96 177.50,278.69 178.00,278.42 178.50,278.16 179.00,277.89 179.50,277.62 180.00,277.35 180.50,277.08 181.00,276.81 181.50,276.54 182.00,276.27 182.50,276.00 183.00,275.72 183.50,275.45 184.00,275.18 184.50,274.90 185.00,274.63 185.50,274.35 186.00,274.08 186.50,273.80 187.00,273.52 187.50,273.24 188.00,272.96 188.50,272.68 189.00,272.40 189.50,272.12 190.00,271.84 190.50,271.56 191.00,271.28 191.50,270.99 192.00,270.71 192.50,270.42 193.00,270.14 193.50,269.85 194.00,269.56 194.50,269.27 195.00,268.98 195.50,268.69 196.00,268.40 196.50,268.11 197.00,267.82 197.50,267.53 198.00,267.23 198.50,266.94 199.00,266.64 199.50,266.34 200.00,266.05 200.50,265.75 201.00,265.45 201.50,265.15 202.00,264.84 202.50,264.54 203.00,264.24 203.50,263.93 204.00,263.63 204.50,263.32 205.00,263.01 205.50,262.70 206.00,262.39 206.50,262.08 207.00,261.77 207.50,261.45 208.00,261.14 208.50,260.82 209.00,260.50 209.50,260.19 210.00,259.87 210.50,259.54 211.00,259.22 211.50,258.90 212.00,258.57 212.50,258.24 213.00,257.92 213.50,257.59 214.00,257.26 214.50,256.92 215.00,256.59 215.50,256.25 216.00,255.92 216.50,255.58 217.00,255.24 217.50,254.90 218.00,254.55 218.50,254.21 219.00,253.86 219.50,253.51 220.00,253.16 220.50,252.81 221.00,252.45 221.50,252.10 222.00,251.74 222.50,251.38 223.00,251.02 223.50,250.65 224.00,250.29 224.50,249.92 225.00,249.55 225.50,249.17 226.00,248.80 226.50,248.42 227.00,248.04 227.50,247.66 228.00,247.28 228.50,246.89 229.00,246.50 229.50,246.11 230.00,245.71 230.50,245.32 231.00,244.92 231.50,244.51 232.00,244.11 232.50,243.70 233.00,243.29 233.50,242.88 234.00,242.46 234.50,242.04 235.00,241.61 235.50,241.19 236.00,240.76 236.50,240.32 237.00,239.89 237.50,239.45 238.00,239.00 238.50,238.55 239.00,238.10 239.50,237.65 240.00,237.19 240.50,236.72 241.00,236.26 241.50,235.78 242.00,235.31 242.50,234.83 243.00,234.34 243.50,233.85 244.00,233.35 244.50,232.85 245.00,232.35 245.50,231.84 246.00,231.32 246.50,230.80 247.00,230.28 247.50,229.74 248.00,229.20 248.50,228.66 249.00,228.11 249.50,227.55 250.00,226.99 250.50,226.42 251.00,225.84 251.50,225.25 252.00,224.66 252.50,224.06 253.00,223.45 253.50,222.84 254.00,222.21 254.50,221.58 255.00,220.94 255.50,220.29 256.00,219.63 256.50,218.96 257.00,218.28 257.50,217.58 258.00,216.88 258.50,216.17 259.00,215.44 259.50,214.71 260.00,213.96 260.50,213.19 261.00,212.42 261.50,211.63 262.00,210.82 262.50,210.00 263.00,209.16 263.50,208.31 264.00,207.44 264.50,206.55 265.00,205.64 265.50,204.72 266.00,203.77 266.50,202.80 267.00,201.80 267.50,200.79 268.00,199.75 268.50,198.68 269.00,197.58 269.50,196.46 270.00,195.30 270.50,194.11 271.00,192.88 271.50,191.62 272.00,190.32 272.50,188.98 273.00,187.59 273.50,186.15 274.00,184.67 274.50,183.12 275.00,181.52 275.10,181.19 275.20,180.86 275.30,180.53 275.40,180.19 275.50,179.85 275.60,179.51 275.70,179.17 275.80,178.82 275.90,178.47 276.00,178.12 276.10,177.76 276.20,177.40 276.30,177.04 276.40,176.68 276.50,176.31 276.60,175.93 276.70,175.56 276.80,175.18 276.90,174.80 277.00,174.41 277.10,174.02 277.20,173.63 277.30,173.23 277.40,172.83 277.50,172.43 277.60,172.02 277.70,171.61 277.80,171.19 277.90,170.77 278.00,170.35 278.10,169.92 278.20,169.49 278.30,169.05 278.40,168.61 278.50,168.16 278.60,167.71 278.70,167.25 278.80,166.79 278.90,166.32 279.00,165.85 279.10,165.38 279.20,164.89 279.30,164.41 279.40,163.91 279.50,163.41 279.60,162.91 279.70,162.40 279.80,161.88 279.90,161.36 280.00,160.83 280.10,160.29 280.20,159.75 280.30,159.20 280.40,158.65 280.50,158.08 280.60,157.51 280.70,156.93 280.80,156.35 280.90,155.75 281.00,155.15 281.10,154.54 281.20,153.93 281.30,153.30 281.40,152.67 281.50,152.02 281.60,151.37 281.70,150.71 281.80,150.04 281.90,149.36 282.00,148.67 282.10,147.97 282.20,147.26 282.30,146.53 282.40,145.80 282.50,145.06 282.60,144.31 282.70,143.54 282.80,142.77 282.90,141.98 283.00,141.18 283.10,140.37 283.20,139.54 283.30,138.71 283.40,137.86 283.50,137.00 283.60,136.13 283.70,135.25 283.80,134.36 283.90,133.45 284.00,132.54 284.10,131.61 284.20,130.67 284.30,129.73 284.40,128.77 284.50,127.81 284.60,126.84 284.70,125.87 284.80,124.90 284.90,123.92 285.00,122.95 285.10,121.98 285.20,121.03 285.30,120.08 285.40,119.15 285.50,118.24 285.60,117.35 285.70,116.50 285.80,115.68 285.90,114.91 286.00,114.19 286.10,113.53 286.20,112.93 286.30,112.40 286.40,111.95 286.50,111.58 286.60,111.30 286.70,111.11 286.80,111.01 286.90,111.01 287.00,111.11 287.10,111.30 287.20,111.58 287.30,111.95 287.40,112.40 287.50,112.93 287.60,113.53 287.70,114.19 287.80,114.91 287.90,115.68 288.00,116.50 288.10,117.35 288.20,118.24 288.30,119.15 288.40,120.08 288.50,121.03 288.60,121.98 288.70,122.95 288.80,123.92 288.90,124.90 289.00,125.87 289.10,126.84 289.20,127.81 289.30,128.77 289.40,129.73 289.50,130.67 289.60,131.61 289.70,132.54 289.80,133.45 289.90,134.36 290.00,135.25 290.10,136.13 290.20,137.00 290.30,137.86 290.40,138.71 290.50,139.54 290.60,140.37 290.70,141.18 290.80,141.98 290.90,142.77 291.00,143.54 291.10,144.31 291.20,145.06 291.30,145.80 291.40,146.53 291.50,147.26 291.60,147.97 291.70,148.67 291.80,149.36 291.90,150.04 292.00,150.71 292.10,151.37 292.20,152.02 292.30,152.67 292.40,153.30 292.50,153.93 292.60,154.54 292.70,155.15 292.80,155.75 292.90,156.35 293.00,156.93 293.10,157.51 293.20,158.08 293.30,158.65 293.40,159.20 293.50,159.75 293.60,160.29 293.70,160.83 293.80,161.36 293.90,161.88 294.00,162.40 294.10,162.91 294.20,163.41 294.30,163.91 294.40,164.41 294.50,164.89 294.60,165.38 294.70,165.85 294.80,166.32 294.90,166.79 295.00,167.25 295.10,167.71 295.20,168.16 295.30,168.61 295.40,169.05 295.50,169.49 295.60,169.92 295.70,170.35 295.80,170.77 295.90,171.19 296.00,171.61 296.10,172.02 296.20,172.43 296.30,172.83 296.40,173.23 296.50,173.63 296.60,174.02 296.70,174.41 296.80,174.80 296.90,175.18 297.00,175.56 297.10,175.93 297.20,176.31 297.30,176.68 297.40,177.04 297.50,177.40 297.60,177.76 297.70,178.12 297.80,178.47 297.90,178.82 298.00,179.17 298.10,179.51 298.20,179.85 298.30,180.19 298.40,180.53 298.50,180.86 298.60,181.19 298.70,181.52 298.80,181.85 298.90,182.17 299.40,183.75 299.90,185.27 300.40,186.73 300.90,188.15 301.40,189.52 301.90,190.85 302.40,192.13 302.90,193.38 303.40,194.59 303.90,195.77 304.40,196.91 304.90,198.02 305.40,199.11 305.90,200.17 306.40,201.20 306.90,202.20 307.40,203.19 307.90,204.15 308.40,205.09 308.90,206.01 309.40,206.91 309.90,207.79 310.40,208.65 310.90,209.50 311.40,210.33 311.90,211.14 312.40,211.94 312.90,212.73 313.40,213.50 313.90,214.26 314.40,215.00 314.90,215.73 315.40,216.46 315.90,217.16 316.40,217.86 316.90,218.55 317.40,219.23 317.90,219.89 318.40,220.55 318.90,221.20 319.40,221.84 319.90,222.46 320.40,223.09 320.90,223.70 321.40,224.30 321.90,224.90 322.40,225.49 322.90,226.07 323.40,226.65 323.90,227.21 324.40,227.78 324.90,228.33 325.40,228.88 325.90,229.42 326.40,229.96 326.90,230.49 327.40,231.01 327.90,231.53 328.40,232.04 328.90,232.55 329.40,233.06 329.90,233.55 330.40,234.05 330.90,234.54 331.40,235.02 331.90,235.50 332.40,235.97 332.90,236.44 333.40,236.91 333.90,237.37 334.40,237.83 334.90,238.28 335.40,238.73 335.90,239.18 336.40,239.62 336.90,240.06 337.40,240.50 337.90,240.93 338.40,241.36 338.90,241.78 339.40,242.21 339.90,242.63 340.40,243.04 340.90,243.45 341.40,243.86 341.90,244.27 342.40,244.68 342.90,245.08 343.40,245.48 343.90,245.87 344.40,246.27 344.90,246.66 345.40,247.04 345.90,247.43 346.40,247.81 346.90,248.19 347.40,248.57 347.90,248.95 348.40,249.32 348.90,249.69 349.40,250.06 349.90,250.43 350.40,250.80 350.90,251.16 351.40,251.52 351.90,251.88 352.40,252.24 352.90,252.59 353.40,252.95 353.90,253.30 354.40,253.65 354.90,254.00 355.40,254.34 355.90,254.69 356.40,255.03 356.90,255.37 357.40,255.71 357.90,256.05 358.40,256.39 358.90,256.72 359.40,257.06 359.90,257.39 360.40,257.72 360.90,258.05 361.40,258.38 361.90,258.70 362.40,259.03 362.90,259.35 363.40,259.67 363.90,259.99 364.40,260.31 364.90,260.63 365.40,260.95 365.90,261.26 366.40,261.58 366.90,261.89 367.40,262.20 367.90,262.52 368.40,262.83 368.90,263.13 369.40,263.44 369.90,263.75 370.40,264.05 370.90,264.36 371.40,264.66 371.90,264.96 372.40,265.27 372.90,265.57 373.40,265.87 373.90,266.16 374.40,266.46 374.90,266.76 375.40,267.05 375.90,267.35 376.40,267.64 376.90,267.94 377.40,268.23 377.90,268.52 378.40,268.81 378.90,269.10 379.40,269.39 379.90,269.68 380.40,269.96 380.90,270.25 381.40,270.54 381.90,270.82 382.40,271.11 382.90,271.39 383.40,271.67 383.90,271.95 384.40,272.24 384.90,272.52 385.40,272.80 385.90,273.08 386.40,273.35 386.90,273.63 387.40,273.91 387.90,274.19 388.40,274.46 388.90,274.74 389.40,275.01 389.90,275.29 390.40,275.56 390.90,275.83 391.40,276.10 391.90,276.38 392.40,276.65 392.90,276.92 393.40,277.19 393.90,277.46 394.40,277.73 394.90,278.00 395.40,278.26 395.90,278.53 396.40,278.80 396.90,279.07 397.40,279.33 397.90,279.60 398.40,279.86 398.90,280.13 399.40,280.39 399.90,280.65 400.40,280.92 400.90,281.18 401.40,281.44 401.90,281.70 402.40,281.97 402.90,282.23 403.40,282.49 403.90,282.75 404.40,283.01 404.90,283.27 405.40,283.53 405.90,283.78 406.40,284.04 406.90,284.30 407.40,284.56 407.90,284.81 408.40,285.07 408.90,285.33 409.40,285.58 409.90,285.84 410.40,286.09 410.90,286.35 411.40,286.60 411.90,286.86 412.40,287.11 412.90,287.36 413.40,287.62 413.90,287.87 414.40,288.12 414.90,288.38 415.40,288.63 415.90,288.88 416.40,289.13 416.90,289.38 417.40,289.63 417.90,289.88 418.40,290.13 418.90,290.38 419.40,290.63 419.90,290.88 420.40,291.13 420.90,291.38 421.40,291.63 421.90,291.88 422.40,292.12 422.90,292.37 423.40,292.62 423.90,292.87 424.40,293.11 424.90,293.36 425.40,293.61 425.90,293.85 426.40,294.10 426.90,294.35 427.40,294.59 427.90,294.84 428.40,295.08 428.90,295.33 429.40,295.57 429.90,295.82 430.40,296.06 430.90,296.30 431.40,296.55 431.90,296.79 432.40,297.04 432.90,297.28 433.40,297.52 433.90,297.77 434.40,298.01 434.90,298.25 435.40,298.49 435.90,298.73 436.40,298.98 436.90,299.22 437.40,299.46 437.90,299.70 438.40,299.94 438.90,300.18 439.40,300.42 439.90,300.67 440.40,300.91 440.90,301.15 441.40,301.39 441.90,301.63 442.40,301.87 442.90,302.11 443.40,302.35 443.90,302.59 444.40,302.82 444.90,303.06 445.40,303.30 445.90,303.54 446.40,303.78 446.90,304.02 447.40,304.26 447.90,304.50 448.40,304.73 448.90,304.97 449.40,305.21 449.90,305.45 450.40,305.69 450.90,305.92 451.40,306.16 451.90,306.40 452.40,306.63 452.90,306.87 453.40,307.11 453.90,307.35 454.40,307.58 454.90,307.82 455.40,308.05 455.90,308.29 456.40,308.53 456.90,308.76 457.40,309.00 457.90,309.24 458.40,309.47 458.90,309.71 459.40,309.94 459.90,310.18 460.40,310.41 460.90,310.65 461.40,310.88 461.90,311.12 462.40,311.35 462.90,311.59 463.40,311.82 463.90,312.06 464.40,312.29 464.90,312.53 465.40,312.76 465.90,313.00 466.40,313.23 466.90,313.46 467.40,313.70 467.90,313.93 468.40,314.17 468.90,314.40 469.40,314.63 469.90,314.87 470.40,315.10 470.90,315.33 471.40,315.57 471.90,315.80 472.40,316.03 472.90,316.27 473.40,316.50 473.90,316.73 474.40,316.96 474.90,317.20 475.40,317.43 475.90,317.66 476.40,317.90 476.90,318.13 477.40,318.36 477.90,318.59 478.40,318.83 478.90,319.06 479.40,319.29 479.90,319.52 480.40,319.75 480.90,319.99 481.40,320.22 481.90,320.45 482.40,320.68 482.90,320.91 483.40,321.15 483.90,321.38 484.40,321.61 484.90,321.84 485.40,322.07 485.90,322.30 486.40,322.53 486.90,322.77 487.40,323.00 487.90,323.23 488.40,323.46 488.90,323.69 489.40,323.92 489.90,324.15 490.40,324.38 490.90,324.61 491.40,324.85 491.90,325.08 492.40,325.31 492.90,325.54 493.40,325.77 493.90,326.00 494.40,326.23 494.90,326.46 495.40,326.69 495.90,326.92 496.40,327.15 496.90,327.38 497.40,327.61 497.90,327.84 498.40,328.07 498.90,328.30 499.40,328.53 499.90,328.76 500.40,328.99 500.90,329.22 501.40,329.45 501.90,329.68 502.40,329.91 502.90,330.14 503.40,330.37 503.90,330.60 504.40,330.83 504.90,331.06 505.40,331.29 505.90,331.52 506.40,331.75 506.90,331.98 507.40,332.21 507.90,332.44 508.40,332.67 508.90,332.90 509.40,333.13 509.50,333.17" fill="none" stroke="#00f000" stroke-width="1.25" stroke-linejoin="round"/>
</g>
<g class="mono">
<text transform="translate(0 116.90) scale(1 1.06) translate(0 -116.90)" x="96.40" y="116.90" text-anchor="end" fill="#c2c2c2" stroke="#c2c2c2">0dB</text><line x1="75.90" y1="114.42" x2="78.80" y2="109.02" stroke="#c2c2c2" stroke-width="1.0"/>
<text transform="translate(0 116.80) scale(1 1.06) translate(0 -116.80)" x="560.60" y="116.80" text-anchor="end" fill="#c2c2c2" stroke="#c2c2c2">100°</text><line x1="540.10" y1="114.32" x2="543.00" y2="108.92" stroke="#c2c2c2" stroke-width="1.0"/><line x1="547.93" y1="114.32" x2="550.83" y2="108.92" stroke="#c2c2c2" stroke-width="1.0"/>
<text transform="translate(0 139.70) scale(1 1.06) translate(0 -139.70)" x="96.40" y="139.70" text-anchor="end" fill="#c2c2c2" stroke="#c2c2c2">−5dB</text>
<text transform="translate(0 139.60) scale(1 1.06) translate(0 -139.60)" x="560.60" y="139.60" text-anchor="end" fill="#c2c2c2" stroke="#c2c2c2">80°</text><line x1="547.93" y1="137.12" x2="550.83" y2="131.72" stroke="#c2c2c2" stroke-width="1.0"/>
<text transform="translate(0 162.50) scale(1 1.06) translate(0 -162.50)" x="96.40" y="162.50" text-anchor="end" fill="#c2c2c2" stroke="#c2c2c2">−10dB</text><line x1="75.90" y1="160.02" x2="78.80" y2="154.62" stroke="#c2c2c2" stroke-width="1.0"/>
<text transform="translate(0 162.40) scale(1 1.06) translate(0 -162.40)" x="560.60" y="162.40" text-anchor="end" fill="#c2c2c2" stroke="#c2c2c2">60°</text><line x1="547.93" y1="159.92" x2="550.83" y2="154.52" stroke="#c2c2c2" stroke-width="1.0"/>
<text transform="translate(0 185.30) scale(1 1.06) translate(0 -185.30)" x="96.40" y="185.30" text-anchor="end" fill="#c2c2c2" stroke="#c2c2c2">−15dB</text>
<text transform="translate(0 185.20) scale(1 1.06) translate(0 -185.20)" x="560.60" y="185.20" text-anchor="end" fill="#c2c2c2" stroke="#c2c2c2">40°</text><line x1="547.93" y1="182.72" x2="550.83" y2="177.32" stroke="#c2c2c2" stroke-width="1.0"/>
<text transform="translate(0 208.10) scale(1 1.06) translate(0 -208.10)" x="96.40" y="208.10" text-anchor="end" fill="#c2c2c2" stroke="#c2c2c2">−20dB</text><line x1="75.90" y1="205.62" x2="78.80" y2="200.22" stroke="#c2c2c2" stroke-width="1.0"/>
<text transform="translate(0 208.00) scale(1 1.06) translate(0 -208.00)" x="560.60" y="208.00" text-anchor="end" fill="#c2c2c2" stroke="#c2c2c2">20°</text><line x1="547.93" y1="205.52" x2="550.83" y2="200.12" stroke="#c2c2c2" stroke-width="1.0"/>
<text transform="translate(0 230.90) scale(1 1.06) translate(0 -230.90)" x="96.40" y="230.90" text-anchor="end" fill="#c2c2c2" stroke="#c2c2c2">−25dB</text>
<text transform="translate(0 230.80) scale(1 1.06) translate(0 -230.80)" x="560.60" y="230.80" text-anchor="end" fill="#c2c2c2" stroke="#c2c2c2">0°</text><line x1="547.93" y1="228.32" x2="550.83" y2="222.92" stroke="#c2c2c2" stroke-width="1.0"/>
<text transform="translate(0 253.70) scale(1 1.06) translate(0 -253.70)" x="96.40" y="253.70" text-anchor="end" fill="#c2c2c2" stroke="#c2c2c2">−30dB</text><line x1="75.90" y1="251.22" x2="78.80" y2="245.82" stroke="#c2c2c2" stroke-width="1.0"/>
<text transform="translate(0 253.60) scale(1 1.06) translate(0 -253.60)" x="560.60" y="253.60" text-anchor="end" fill="#c2c2c2" stroke="#c2c2c2">−20°</text><line x1="547.93" y1="251.12" x2="550.83" y2="245.72" stroke="#c2c2c2" stroke-width="1.0"/>
<text transform="translate(0 276.50) scale(1 1.06) translate(0 -276.50)" x="96.40" y="276.50" text-anchor="end" fill="#c2c2c2" stroke="#c2c2c2">−35dB</text>
<text transform="translate(0 276.40) scale(1 1.06) translate(0 -276.40)" x="560.60" y="276.40" text-anchor="end" fill="#c2c2c2" stroke="#c2c2c2">−40°</text><line x1="547.93" y1="273.92" x2="550.83" y2="268.52" stroke="#c2c2c2" stroke-width="1.0"/>
<text transform="translate(0 299.30) scale(1 1.06) translate(0 -299.30)" x="96.40" y="299.30" text-anchor="end" fill="#c2c2c2" stroke="#c2c2c2">−40dB</text><line x1="75.90" y1="296.82" x2="78.80" y2="291.42" stroke="#c2c2c2" stroke-width="1.0"/>
<text transform="translate(0 299.20) scale(1 1.06) translate(0 -299.20)" x="560.60" y="299.20" text-anchor="end" fill="#c2c2c2" stroke="#c2c2c2">−60°</text><line x1="547.93" y1="296.72" x2="550.83" y2="291.32" stroke="#c2c2c2" stroke-width="1.0"/>
<text transform="translate(0 322.10) scale(1 1.06) translate(0 -322.10)" x="96.40" y="322.10" text-anchor="end" fill="#c2c2c2" stroke="#c2c2c2">−45dB</text>
<text transform="translate(0 322.00) scale(1 1.06) translate(0 -322.00)" x="560.60" y="322.00" text-anchor="end" fill="#c2c2c2" stroke="#c2c2c2">−80°</text><line x1="547.93" y1="319.52" x2="550.83" y2="314.12" stroke="#c2c2c2" stroke-width="1.0"/>
<text transform="translate(0 344.90) scale(1 1.06) translate(0 -344.90)" x="96.40" y="344.90" text-anchor="end" fill="#c2c2c2" stroke="#c2c2c2">−50dB</text><line x1="75.90" y1="342.42" x2="78.80" y2="337.02" stroke="#c2c2c2" stroke-width="1.0"/>
<text transform="translate(0 344.80) scale(1 1.06) translate(0 -344.80)" x="560.60" y="344.80" text-anchor="end" fill="#c2c2c2" stroke="#c2c2c2">−100°</text><line x1="540.10" y1="342.32" x2="543.00" y2="336.92" stroke="#c2c2c2" stroke-width="1.0"/><line x1="547.93" y1="342.32" x2="550.83" y2="336.92" stroke="#c2c2c2" stroke-width="1.0"/>
<text transform="translate(0 364.60) scale(1 1.06) translate(0 -364.60)" x="267.24" y="364.60" text-anchor="end" fill="#c2c2c2" stroke="#c2c2c2">10KHz</text><line x1="238.91" y1="362.12" x2="241.81" y2="356.72" stroke="#c2c2c2" stroke-width="1.0"/>
<text transform="translate(0 364.60) scale(1 1.06) translate(0 -364.60)" x="472.41" y="364.60" text-anchor="end" fill="#c2c2c2" stroke="#c2c2c2">100KHz</text><line x1="436.25" y1="362.12" x2="439.15" y2="356.72" stroke="#c2c2c2" stroke-width="1.0"/><line x1="444.08" y1="362.12" x2="446.98" y2="356.72" stroke="#c2c2c2" stroke-width="1.0"/>
<text x="296.0" y="106.45" text-anchor="end" fill="#00f000" stroke="#00f000" style="stroke-width:0.6px;font-size:14.3px;letter-spacing:-0.75px">V</text><text x="319.7" y="106.45" text-anchor="end" fill="#00f000" stroke="#00f000" style="stroke-width:0.6px;font-size:14.3px;letter-spacing:-0.75px">vo</text>
<path d="M301.7 95.2Q297.6 101.7 301.7 108.2M322.6 95.2Q326.7 101.7 322.6 108.2" fill="none" stroke="#00f000" stroke-width="1.75" stroke-linecap="round"/>
</g>
</svg>
<div id="title">Draft1.raw</div>
</body></html>
